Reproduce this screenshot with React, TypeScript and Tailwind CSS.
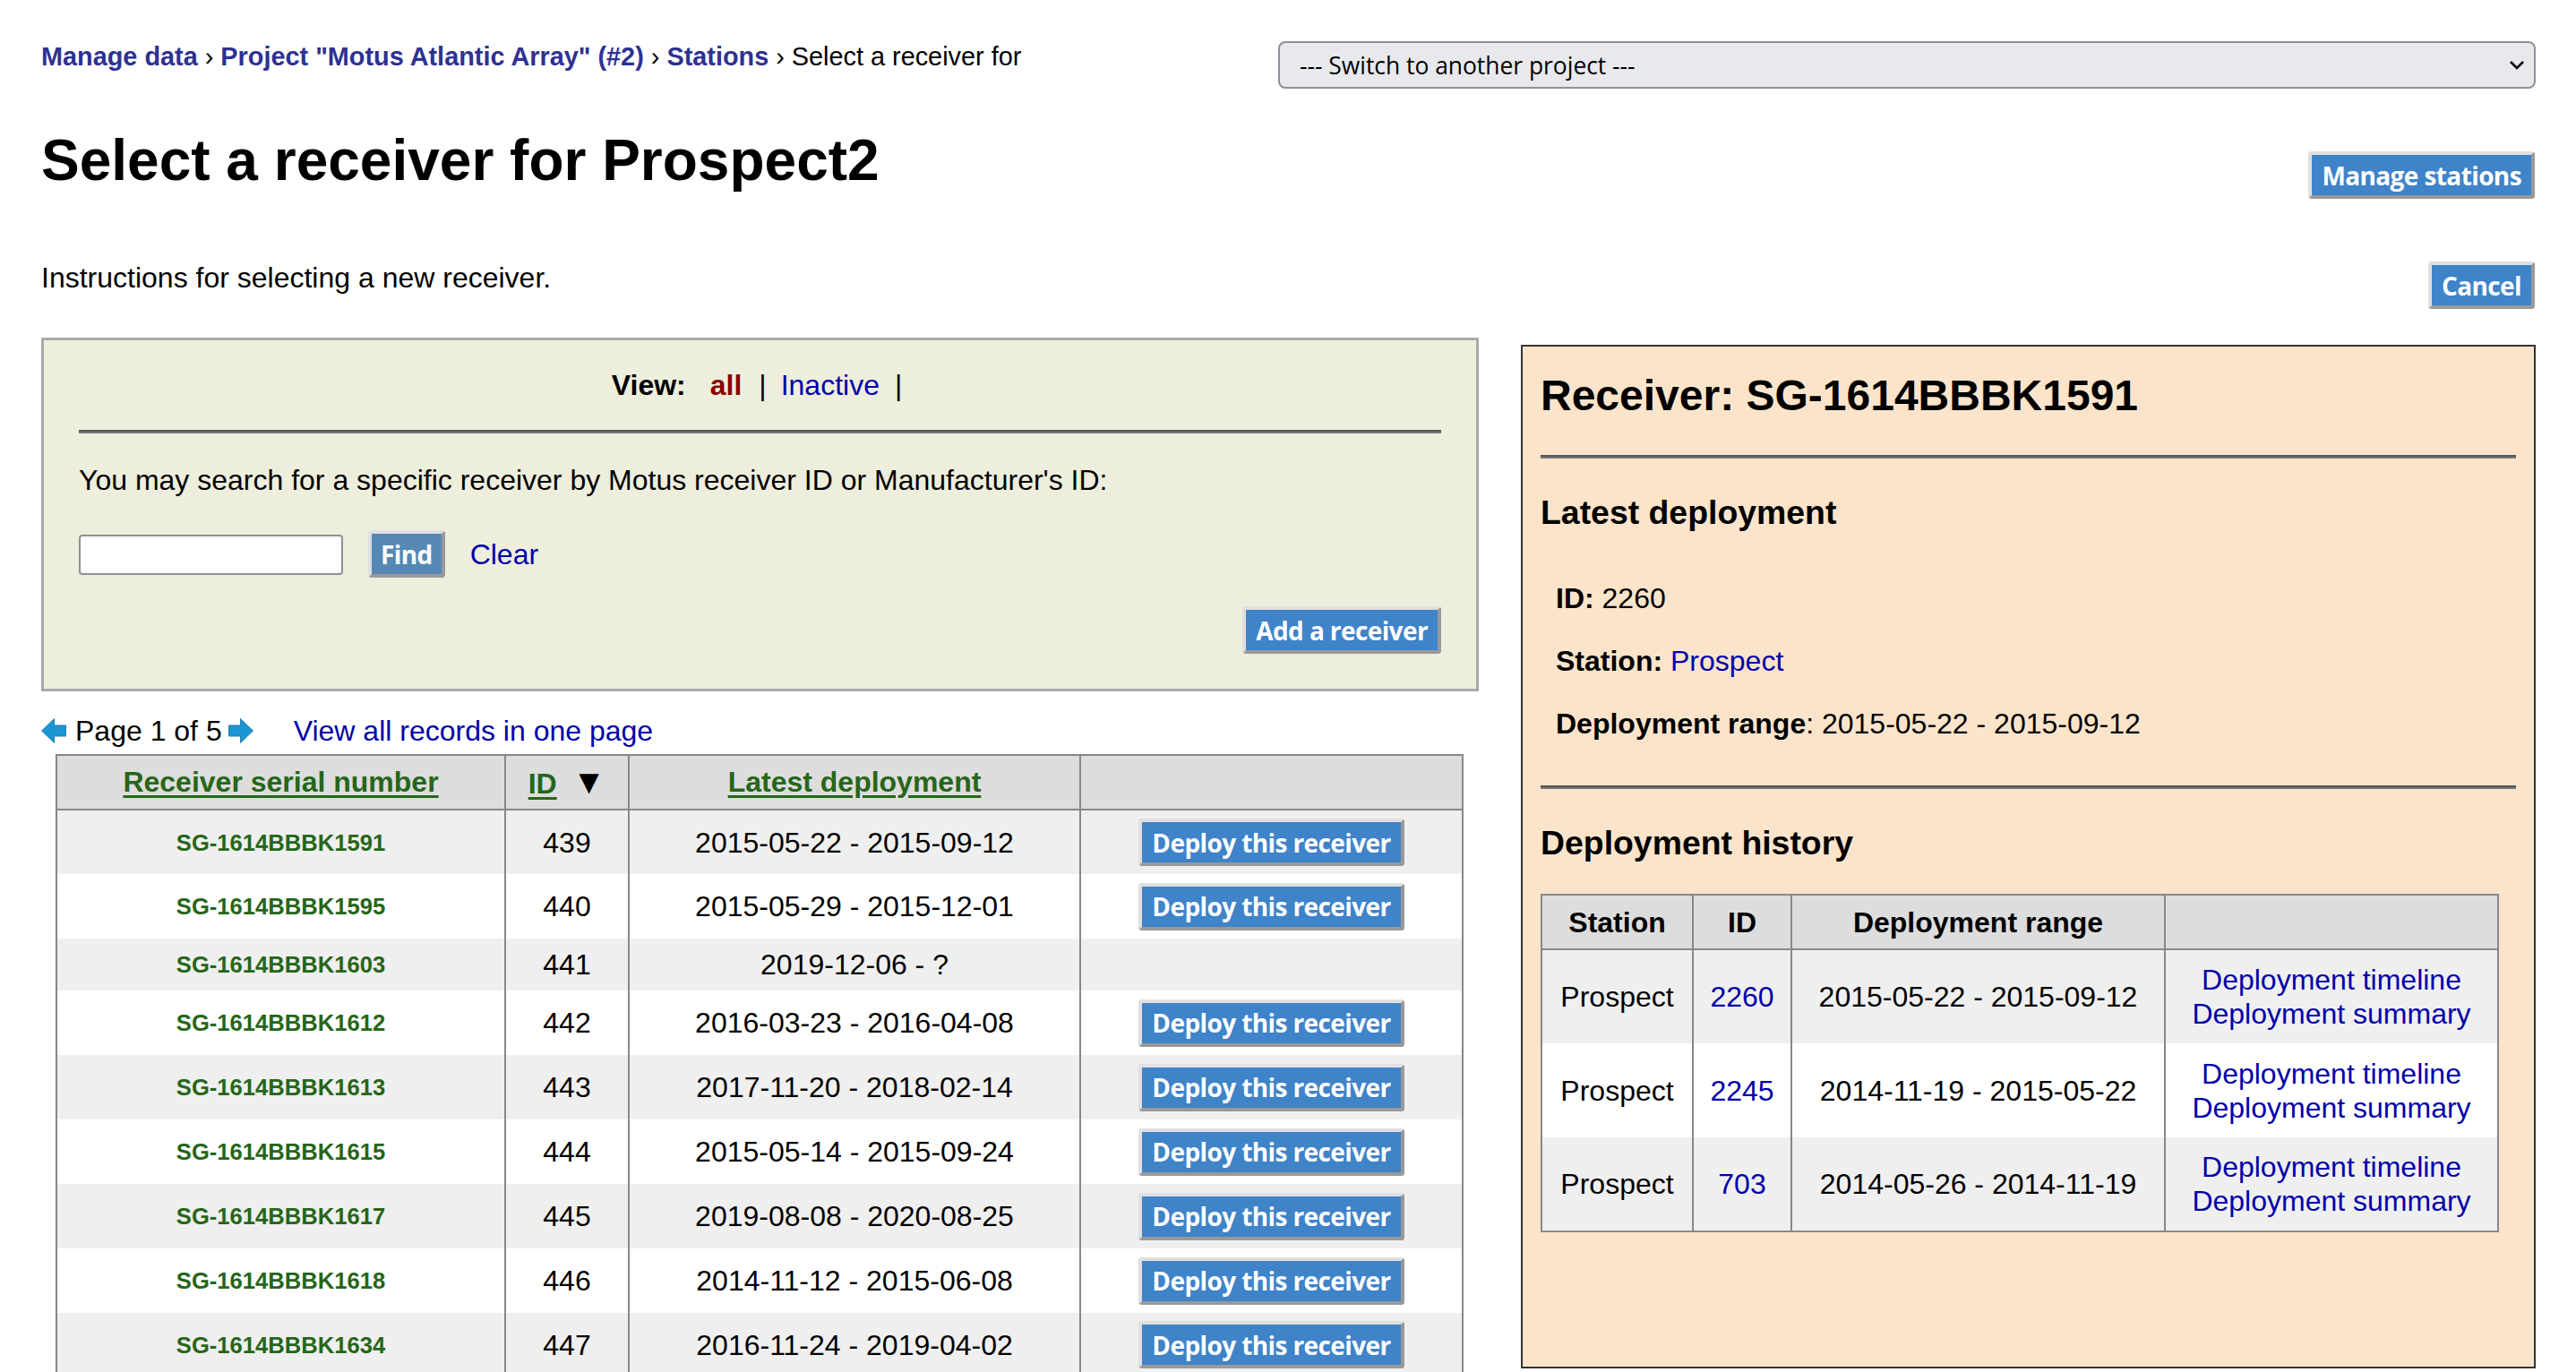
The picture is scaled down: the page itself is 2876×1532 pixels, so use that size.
const rows = [
  { serial: "SG-1614BBBK1591", id: "439", range: "2015-05-22 - 2015-09-12", deploy: true },
  { serial: "SG-1614BBBK1595", id: "440", range: "2015-05-29 - 2015-12-01", deploy: true },
  { serial: "SG-1614BBBK1603", id: "441", range: "2019-12-06 - ?", deploy: false },
  { serial: "SG-1614BBBK1612", id: "442", range: "2016-03-23 - 2016-04-08", deploy: true },
  { serial: "SG-1614BBBK1613", id: "443", range: "2017-11-20 - 2018-02-14", deploy: true },
  { serial: "SG-1614BBBK1615", id: "444", range: "2015-05-14 - 2015-09-24", deploy: true },
  { serial: "SG-1614BBBK1617", id: "445", range: "2019-08-08 - 2020-08-25", deploy: true },
  { serial: "SG-1614BBBK1618", id: "446", range: "2014-11-12 - 2015-06-08", deploy: true },
  { serial: "SG-1614BBBK1634", id: "447", range: "2016-11-24 - 2019-04-02", deploy: true },
];

const history = [
  { id: "2260", range: "2015-05-22 - 2015-09-12" },
  { id: "2245", range: "2014-11-19 - 2015-05-22" },
  { id: "703", range: "2014-05-26 - 2014-11-19" },
];

function Btn({ children, className = "" }: { children: React.ReactNode; className?: string }) {
  return (
    <button
      className={`h-[53px] rounded-[4px] border-4 border-t-[#e0e0e0] border-l-[#e0e0e0] border-r-[#999] border-b-[#999] bg-[#3f83c8] px-[11px] font-['Open_Sans'] text-[28px] leading-none font-bold tracking-[-0.6px] text-white ${className}`}
    >
      {children}
    </button>
  );
}

function Arrow({ flip }: { flip?: boolean }) {
  return (
    <svg width="28" height="28" viewBox="0 0 28 28" className={flip ? "" : "-scale-x-100"}>
      <path d="M.5 8h13V.5L27.5 14l-14 13.5V20H.5z" fill="#1b96d4" stroke="#2b7fae" strokeWidth="1" strokeLinejoin="round" />
    </svg>
  );
}

function Rule({ className = "" }: { className?: string }) {
  return <div className={`h-[4px] border-t-2 border-[#555] bg-[#777] ${className}`} />;
}

export default function App() {
  return (
    <div className="relative h-screen overflow-hidden bg-white px-[46px] pt-[46px] font-['Liberation_Sans',sans-serif] text-[32px] leading-[34px] text-black">
      <div className="flex items-start justify-between">
        <div className="text-[28.85px] text-[#000]">
          <a className="font-bold text-[#2e3192]">Manage data</a> ›{" "}
          <a className="font-bold text-[#2e3192]">Project "Motus Atlantic Array" (#2)</a> ›{" "}
          <a className="font-bold text-[#2e3192]">Stations</a> › Select a receiver for
        </div>
        <div className="-mr-[1px] flex h-[53px] w-[1404px] items-center justify-between rounded-[8px] border-2 border-[#8f8f9d] bg-[#e9e9ed] pr-[10px] pl-[22px] font-['Open_Sans'] text-[26.4px]">
          <span>--- Switch to another project ---</span>
          <svg width="18" height="12" viewBox="0 0 18 12" fill="none" stroke="#000" strokeWidth="2.6">
            <path d="M2 2l7 7 7-7" />
          </svg>
        </div>
      </div>

      <div className="mt-[-8px] flex items-start justify-between">
        <h1 className="mt-[51px] text-[64px] leading-[74px] font-bold">Select a receiver for Prospect2</h1>
        <Btn className="mt-[78px]">Manage stations</Btn>
      </div>

      <div className="mt-[14px] flex items-start justify-between">
        <p className="mt-[57px]">Instructions for selecting a new receiver.</p>
        <Btn className="mt-[56px]">Cancel</Btn>
      </div>

      <div className="mt-[32px] flex items-start gap-[47px]">
        <div className="w-[1605px] shrink-0">
          <div className="h-[395px] border-[3px] border-[#aaa] bg-[#eeeedd] px-[39px] pt-[33px]">
            <div className="pr-[7px] pb-[33px] text-center">
              <span className="font-bold">View:</span>
              <span className="ml-[27px] font-bold text-[#8b0000]">all</span>
              <span className="mr-[16px] ml-[19px]">|</span>
              <a className="text-[#0000aa]">Inactive</a>
              <span className="ml-[17px]">|</span>
            </div>
            <Rule />
            <p className="mt-[35px]">You may search for a specific receiver by Motus receiver ID or Manufacturer's ID:</p>
            <div className="mt-[39px] flex items-center">
              <input className="mt-[1px] h-[45px] w-[295px] rounded-[4px] border-2 border-[#8f8f9d] bg-white" />
              <button className="ml-[28px] h-[53px] rounded-[4px] border-4 border-t-[#e0e0e0] border-l-[#e0e0e0] border-r-[#999] border-b-[#999] bg-[#5589b4] px-[10px] font-['Open_Sans'] text-[28px] leading-none font-bold tracking-[-0.6px] text-white">
                Find
              </button>
              <a className="ml-[28px] text-[#0000aa]">Clear</a>
            </div>
            <div className="mt-[32px] flex justify-end">
              <Btn>Add a receiver</Btn>
            </div>
          </div>

          <div className="mt-[27px] flex items-center">
            <Arrow />
            <span className="ml-[10px]">Page 1 of 5</span>
            <span className="ml-[7px]">
              <Arrow flip />
            </span>
            <a className="ml-[45px] text-[#0000aa]">View all records in one page</a>
          </div>

          <table className="mt-[9px] ml-[16px] w-[1572px] table-fixed border-collapse border-2 border-[#888]">
            <colgroup>
              <col className="w-[501px]" />
              <col className="w-[138px]" />
              <col className="w-[504px]" />
              <col />
            </colgroup>
            <thead>
              <tr className="h-[61px] bg-[#dddddd]">
                <th className="border-2 border-[#888] pb-[2px] font-bold text-[#266619] underline underline-offset-4">Receiver serial number</th>
                <th className="border-2 border-[#888] pb-[2px] font-bold">
                  <span className="text-[#266619] underline underline-offset-4">ID</span>
                  <span className="ml-[17px] text-[38px] leading-none">▼</span>
                </th>
                <th className="border-2 border-[#888] pb-[2px] font-bold text-[#266619] underline underline-offset-4">Latest deployment</th>
                <th className="border-2 border-[#888]" />
              </tr>
            </thead>
            <tbody>
              {rows.map((r, i) => (
                <tr key={r.id} className={`${r.deploy ? "h-[72px]" : "h-[58px]"} ${i % 2 === 0 ? "bg-[#efefef]" : "bg-white"}`}>
                  <td className="border-x-2 border-[#888] text-center text-[25.6px] font-bold text-[#266619]">{r.serial}</td>
                  <td className="border-x-2 border-[#888] text-center">{r.id}</td>
                  <td className="border-x-2 border-[#888] text-center">{r.range}</td>
                  <td className="border-x-2 border-[#888] text-center">{r.deploy && <Btn>Deploy this receiver</Btn>}</td>
                </tr>
              ))}
            </tbody>
          </table>
        </div>

        <div className="mt-[8px] -mr-[1px] h-[1143px] grow border-2 border-[#333] bg-[#fce4cb] px-[20px]">
          <h2 className="mt-[27px] text-[48px] leading-[56px] font-bold">Receiver: SG-1614BBBK1591</h2>
          <Rule className="mt-[38px]" />
          <h3 className="mt-[39px] text-[37.4px] leading-[42px] font-bold">Latest deployment</h3>
          <div className="mt-[58px] ml-[17px] space-y-[36px]">
            <p><b>ID:</b> 2260</p>
            <p><b>Station:</b> <a className="text-[#0000aa]">Prospect</a></p>
            <p><b>Deployment range</b>: 2015-05-22 - 2015-09-12</p>
          </div>
          <Rule className="mt-[52px]" />
          <h3 className="mt-[39px] text-[37.4px] leading-[42px] font-bold">Deployment history</h3>
          <table className="mt-[36px] w-[1070px] table-fixed border-collapse border-2 border-[#888]">
            <colgroup>
              <col className="w-[169px]" />
              <col className="w-[110px]" />
              <col className="w-[417px]" />
              <col />
            </colgroup>
            <thead>
              <tr className="h-[61px] bg-[#dddddd]">
                <th className="border-2 border-[#888] font-bold">Station</th>
                <th className="border-2 border-[#888] font-bold">ID</th>
                <th className="border-2 border-[#888] font-bold">Deployment range</th>
                <th className="border-2 border-[#888]" />
              </tr>
            </thead>
            <tbody>
              {history.map((h, i) => (
                <tr key={h.id} className={`h-[105px] ${i % 2 === 0 ? "bg-[#efefef]" : "bg-white"}`}>
                  <td className="border-x-2 border-[#888] text-center">Prospect</td>
                  <td className="border-x-2 border-[#888] text-center text-[#0000aa]">{h.id}</td>
                  <td className="border-x-2 border-[#888] text-center">{h.range}</td>
                  <td className="border-x-2 border-[#888] text-center leading-[38px] text-[#0000aa]">
                    Deployment timeline
                    <br />
                    Deployment summary
                  </td>
                </tr>
              ))}
            </tbody>
          </table>
        </div>
      </div>
    </div>
  );
}
